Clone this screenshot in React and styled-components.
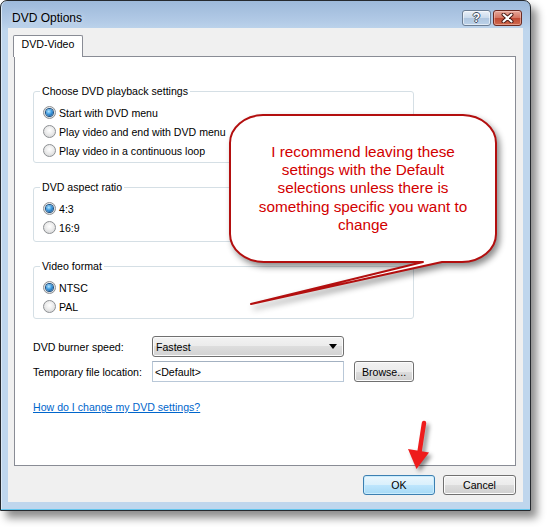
import React from 'react';
import styled, { createGlobalStyle } from 'styled-components';

const GlobalStyle = createGlobalStyle`
  html, body {
    margin: 0;
    padding: 0;
    background: #fff;
  }
  body {
    font-family: "Liberation Sans", Arial, sans-serif;
  }
`;

const playbackOptions = [
  { id: 'menu', label: 'Start with DVD menu', checked: true },
  { id: 'end', label: 'Play video and end with DVD menu' },
  { id: 'loop', label: 'Play video in a continuous loop' },
];

const aspectOptions = [
  { id: '43', label: '4:3', checked: true },
  { id: '169', label: '16:9' },
];

const formatOptions = [
  { id: 'ntsc', label: 'NTSC', checked: true },
  { id: 'pal', label: 'PAL' },
];

function Group({ title, options, bottom = 2 }) {
  return (
    <GroupBox $bottom={bottom}>
      <Legend>{title}</Legend>
      {options.map(o => (
        <RadioRow key={o.id}>
          <Radio $checked={o.checked} />
          <span>{o.label}</span>
        </RadioRow>
      ))}
    </GroupBox>
  );
}

export default function App() {
  return (
    <Stage>
      <GlobalStyle />
      <Window>
        <TitleBar>
          <Title>DVD Options</Title>
          <CaptionButtons>
            <HelpButton>?</HelpButton>
            <CloseButton>
              <svg width="13" height="10" viewBox="0 0 13 10">
                <path d="M2.5 1.5l8 7M10.5 1.5l-8 7" stroke="#4a1a14" strokeWidth="4" strokeLinecap="round" />
                <path d="M2.5 1.5l8 7M10.5 1.5l-8 7" stroke="#fff" strokeWidth="2" strokeLinecap="round" />
              </svg>
            </CloseButton>
          </CaptionButtons>
        </TitleBar>
        <Client>
          <TabStrip>
            <Tab>DVD-Video</Tab>
          </TabStrip>
          <Panel>
            <Group title="Choose DVD playback settings" options={playbackOptions} />
            <Group title="DVD aspect ratio" options={aspectOptions} bottom={4} />
            <Group title="Video format" options={formatOptions} />

            <FieldRow $top={17}>
              <FieldLabel>DVD burner speed:</FieldLabel>
              <Combo>
                <span>Fastest</span>
                <svg width="8" height="5" viewBox="0 0 8 5">
                  <path d="M0 0h8L4 5z" fill="#000" />
                </svg>
              </Combo>
            </FieldRow>
            <FieldRow $top={4}>
              <FieldLabel>Temporary file location:</FieldLabel>
              <TextBox>&lt;Default&gt;</TextBox>
              <Button $width={60} $left={10}>Browse...</Button>
            </FieldRow>

            <HelpLink>How do I change my DVD settings?</HelpLink>
          </Panel>
          <Footer>
            <Button $width={72} $primary>OK</Button>
            <Button $width={73}>Cancel</Button>
          </Footer>
        </Client>
      </Window>

      <Callout>
        <CalloutShape width="268" height="200" viewBox="0 0 268 200">
          <path
            d="M34 1H234A34 28 0 0 1 267 29V120A34 28 0 0 1 233 148H213L22 190L194 148H35A34 28 0 0 1 1 120V29A34 28 0 0 1 34 1Z"
            fill="#fff"
            stroke="#b30f0f"
            strokeWidth="2"
            strokeLinejoin="round"
          />
        </CalloutShape>
        <CalloutText>
          I recommend leaving these
          <br />
          settings with the Default
          <br />
          selections unless there is
          <br />
          something specific you want to
          <br />
          change
        </CalloutText>
      </Callout>

      <Pointer width="40" height="60" viewBox="0 0 40 60">
        <path d="M24 8L19.5 37" stroke="#ee1c1c" strokeWidth="4.5" strokeLinecap="round" />
        <path d="M8 34L29 37.5L16.5 54Z" fill="#ee1c1c" />
      </Pointer>
    </Stage>
  );
}

const Stage = styled.div`
  position: relative;
  width: 547px;
  height: 527px;
  overflow: hidden;
`;

const Window = styled.div`
  width: 531px;
  height: 511px;
  box-sizing: border-box;
  border: 1px solid #25292e;
  border-radius: 7px 7px 0 0;
  background: linear-gradient(
    to bottom,
    #9db9da 0,
    #b2cae6 20px,
    #bfd6ed 30px,
    #bfd6ed 100%
  );
  box-shadow: inset 0 -1px 0 #63c4ec, inset 1px 0 0 #dbe8f5,
    6px 7px 9px rgba(0, 0, 0, 0.45);
  display: flex;
  flex-direction: column;
  padding: 0 7px 8px 7px;
`;

const TitleBar = styled.div`
  height: 27px;
  box-sizing: border-box;
  padding: 6px 1px 0 4px;
  display: flex;
  align-items: center;
  justify-content: space-between;
`;

const Title = styled.span`
  font-size: 12px;
  color: #000;
  text-shadow: 0 0 6px rgba(255, 255, 255, 0.7);
`;

const CaptionButtons = styled.div`
  display: flex;
  gap: 2px;
`;

const CaptionButton = styled.div`
  width: 29px;
  height: 16px;
  box-sizing: border-box;
  border-radius: 3px;
  display: flex;
  align-items: center;
  justify-content: center;
`;

const HelpButton = styled(CaptionButton)`
  border: 1px solid #6b7d93;
  background: linear-gradient(to bottom, #e9f0f8 0%, #cbdbec 48%, #afc6df 52%, #bcd2e9 100%);
  box-shadow: inset 0 0 0 1px rgba(255, 255, 255, 0.55);
  color: #fff;
  font: bold 12px "Liberation Sans", Arial, sans-serif;
  text-shadow: 1px 0 0 #3d4d60, -1px 0 0 #3d4d60, 0 1px 0 #3d4d60, 0 -1px 0 #3d4d60;
`;

const CloseButton = styled(CaptionButton)`
  border: 1px solid #6a2a22;
  background: linear-gradient(to bottom, #e6a89b 0%, #d57663 48%, #c04a35 52%, #cf6a4e 100%);
  box-shadow: inset 0 0 0 1px rgba(255, 220, 210, 0.45);
`;

const Client = styled.div`
  flex: 1;
  background: #f0f0f0;
  display: flex;
  flex-direction: column;
  padding: 7px 7px 7px 6px;
  font-size: 10.6px;
  color: #000;
`;

const TabStrip = styled.div`
  height: 21px;
  display: flex;
`;

const Tab = styled.div`
  position: relative;
  z-index: 1;
  width: 70px;
  height: 22px;
  margin-left: -1px;
  box-sizing: border-box;
  border: 1px solid #898c95;
  border-bottom: none;
  border-radius: 2px 2px 0 0;
  background: #fff;
  text-align: center;
  line-height: 17px;
`;

const Panel = styled.div`
  flex: 1;
  border: 1px solid #898c95;
  background: #fff;
  padding: 28px 0 0 18px;
  display: flex;
  flex-direction: column;
  align-items: flex-start;
`;

const GroupBox = styled.fieldset`
  width: 381px;
  box-sizing: border-box;
  margin: 0 0 18px;
  padding: 5px 9px ${p => p.$bottom}px;
  min-inline-size: 0;
  border: 1px solid #d5dfe5;
  border-radius: 3px;
  &:last-of-type {
    margin-bottom: 0;
  }
`;

const Legend = styled.legend`
  padding: 0 2px;
  margin-left: -3px;
  line-height: 13px;
`;

const RadioRow = styled.div`
  height: 19px;
  display: flex;
  align-items: center;
  gap: 3px;
`;

const Radio = styled.span`
  flex: none;
  width: 13px;
  height: 13px;
  box-sizing: border-box;
  border-radius: 50%;
  border: 1px solid #8d9093;
  background: radial-gradient(circle at 50% 40%, #ffffff 0%, #ececec 45%, #cfd0d1 100%);
  display: flex;
  align-items: center;
  justify-content: center;
  &::after {
    content: '';
    display: ${p => (p.$checked ? 'block' : 'none')};
    width: 7px;
    height: 7px;
    border-radius: 50%;
    background: radial-gradient(circle at 40% 35%, #b5e6ff 0%, #3f9be0 45%, #125a9e 85%);
    box-shadow: 0 0 0 1px #1b4f80;
  }
`;

const FieldRow = styled.div`
  margin-top: ${p => p.$top}px;
  height: 21px;
  display: flex;
  align-items: center;
`;

const FieldLabel = styled.span`
  width: 119px;
`;

const Combo = styled.div`
  width: 192px;
  height: 21px;
  box-sizing: border-box;
  border: 1px solid #707070;
  border-radius: 3px;
  background: linear-gradient(to bottom, #f3f3f3 0%, #ebebeb 50%, #dddddd 50%, #d2d2d2 100%);
  box-shadow: inset 0 0 0 1px #fbfbfb;
  display: flex;
  align-items: center;
  justify-content: space-between;
  padding: 0 6px 0 3px;
`;

const TextBox = styled.div`
  width: 192px;
  height: 21px;
  box-sizing: border-box;
  border: 1px solid #b9c8d8;
  border-top-color: #a3b1c1;
  background: #fff;
  display: flex;
  align-items: center;
  padding-left: 2px;
`;

const Button = styled.div`
  width: ${p => p.$width}px;
  height: ${p => (p.$primary || !p.$left ? 20 : 21)}px;
  margin-left: ${p => p.$left || 0}px;
  box-sizing: border-box;
  border: 1px solid ${p => (p.$primary ? '#3c7fb1' : '#707070')};
  border-radius: 3px;
  background: ${p =>
    p.$primary
      ? 'linear-gradient(to bottom, #eaf6fd 0%, #d9f0fc 50%, #bee6fd 50%, #a7d9f5 100%)'
      : 'linear-gradient(to bottom, #f2f2f2 0%, #ebebeb 50%, #dddddd 50%, #cfcfcf 100%)'};
  box-shadow: inset 0 0 0 1px ${p => (p.$primary ? '#c9ecfd' : '#fcfcfc')};
  display: flex;
  align-items: center;
  justify-content: center;
`;

const HelpLink = styled.a`
  margin-top: 19px;
  line-height: 13px;
  color: #0066cc;
  text-decoration: underline;
  cursor: pointer;
`;

const Footer = styled.div`
  margin-top: 9px;
  display: flex;
  justify-content: flex-end;
  gap: 8px;
`;

const Callout = styled.div`
  position: absolute;
  left: 229px;
  top: 114px;
  width: 268px;
  height: 149px;
  display: flex;
  align-items: center;
  justify-content: center;
`;

const CalloutShape = styled.svg`
  position: absolute;
  left: 0;
  top: 0;
  overflow: visible;
  filter: drop-shadow(3px 4px 3px rgba(0, 0, 0, 0.45));
`;

const CalloutText = styled.div`
  position: relative;
  text-align: center;
  font-size: 15.3px;
  line-height: 18.25px;
  color: #d20000;
`;

const Pointer = styled.svg`
  position: absolute;
  left: 400px;
  top: 415px;
  overflow: visible;
  filter: drop-shadow(3px 3px 2px rgba(0, 0, 0, 0.45));
`;
